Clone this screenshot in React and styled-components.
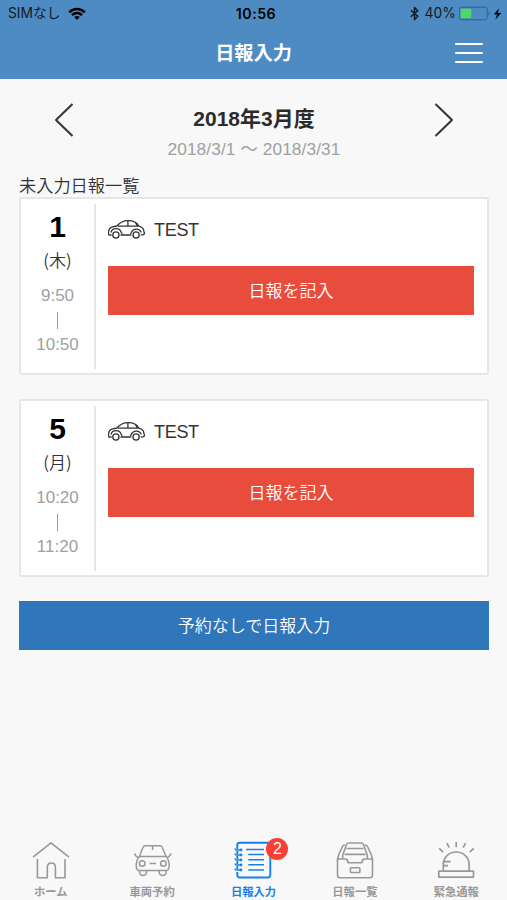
import React from "react";
import styled, { createGlobalStyle } from "styled-components";

const GlobalStyle = createGlobalStyle`
  * { box-sizing: border-box; }
  body {
    margin: 0;
    background: #f8f8f8;
    color: #333;
    font-family: "Liberation Sans", "Noto Sans CJK JP", sans-serif;
  }
`;

const Screen = styled.div`
  width: 507px;
  height: 900px;
  display: flex;
  flex-direction: column;
  background: #f8f8f8;
  overflow: hidden;
`;

const Header = styled.header`
  height: 79px;
  flex: none;
  background: #4f8bc3;
`;

const StatusBar = styled.div`
  height: 27px;
  display: grid;
  grid-template-columns: 1fr auto 1fr;
  align-items: center;
  padding: 0 5px 0 8px;
  color: #101a24;
  font-family: Inter, "Noto Sans CJK JP", sans-serif;
  font-size: 14px;
  line-height: 27px;
`;

const StatusGroup = styled.div`
  display: flex;
  align-items: center;
  height: 27px;
  justify-content: ${(p) => (p.$end ? "flex-end" : "flex-start")};
`;

const Carrier = styled.span`
  width: 60px;
  font-size: 13.8px;
  white-space: nowrap;
  line-height: 29px;
`;

const Clock = styled.span`
  font-weight: 600;
  font-size: 14.2px;
  letter-spacing: 0.5px;
  margin-left: 2px;
  color: #000;
`;

const Percent = styled.span`
  margin: 0 3px 0 6px;
  font-size: 13.8px;
  line-height: 29px;
  letter-spacing: 0.1px;
`;

const TitleBar = styled.div`
  height: 52px;
  display: grid;
  grid-template-columns: 1fr auto 1fr;
  align-items: center;
  padding: 0 24px;
`;

const Title = styled.h1`
  grid-column: 2;
  margin: 0;
  color: #fff;
  font-size: 19.2px;
  line-height: 54px;
  height: 52px;
  font-weight: 700;
`;

const MenuButton = styled.button`
  justify-self: end;
  width: 28px;
  height: 21px;
  padding: 0;
  border: 0;
  background: none;
  display: flex;
  flex-direction: column;
  justify-content: space-between;
`;

const MenuLine = styled.span`
  width: 28px;
  height: 2.4px;
  border-radius: 1px;
  background: #fff;
`;

const Main = styled.main`
  flex: 1;
  padding: 0 18px 0 19px;
`;

const MonthNav = styled.div`
  height: 95px;
  display: flex;
  justify-content: space-between;
  align-items: flex-start;
  padding: 23px 35px 0 35px;
`;

const MonthText = styled.div`
  text-align: center;
`;

const Month = styled.div`
  height: 31px;
  line-height: 33px;
  font-size: 21px;
  font-weight: 700;
  color: #2b2b2b;
`;

const Range = styled.div`
  height: 31px;
  line-height: 33px;
  font-size: 17.3px;
  letter-spacing: 0.1px;
  color: #a0a0a0;
`;

const SectionLabel = styled.h2`
  margin: 0;
  height: 23px;
  line-height: 24px;
  font-size: 17.2px;
  font-weight: 350;
  color: #333;
`;

const Card = styled.section`
  height: 178px;
  margin-bottom: 24px;
  display: flex;
  background: #fff;
  border: 2px solid #e6e6e6;
  border-radius: 2px;
  padding: 5px 13px 4px 0;
`;

const DateColumn = styled.div`
  width: 75px;
  border-right: 2px solid #e7e7e7;
  text-align: center;
`;

const Day = styled.div`
  height: 39px;
  line-height: 45px;
  font-size: 30px;
  font-weight: 700;
  color: #000;
`;

const Weekday = styled.div`
  height: 34px;
  line-height: 34px;
  font-family: "Noto Sans CJK JP", sans-serif;
  font-size: 17px;
  font-weight: 350;
  color: #333;
`;

const Time = styled.div`
  height: 37px;
  line-height: 38px;
  font-size: 17px;
  color: #a0a0a0;
`;

const TimeBar = styled.div`
  width: 1.3px;
  height: 17px;
  margin: -2px auto -3px;
  background: #999;
`;

const CardBody = styled.div`
  flex: 1;
  padding-left: 12px;
`;

const Vehicle = styled.div`
  height: 62px;
  padding-top: 14px;
  display: flex;
  align-items: flex-start;
`;

const VehicleName = styled.span`
  margin-left: 8px;
  line-height: 24px;
  font-size: 18px;
  letter-spacing: -0.3px;
`;

const ActionButton = styled.button`
  display: block;
  width: 100%;
  height: 49px;
  padding: 2px 0 0;
  border: 0;
  background: ${(p) => (p.$primary ? "#2f76ba" : "#e74c3d")};
  color: #fff;
  font-family: inherit;
  font-size: 17px;
  font-weight: 350;
  line-height: 47px;
`;

const TabBar = styled.nav`
  height: 64px;
  flex: none;
  display: grid;
  grid-template-columns: repeat(5, 1fr);
`;

const Tab = styled.div`
  display: flex;
  flex-direction: column;
  align-items: center;
  color: ${(p) => (p.$active ? "#1680ec" : "#999")};
`;

const TabIcon = styled.span`
  position: relative;
  width: 44px;
  height: 46px;
`;

const TabLabel = styled.span`
  height: 18px;
  line-height: 20px;
  font-size: 11.3px;
  font-weight: 700;
`;

const Badge = styled.span`
  position: absolute;
  left: 35px;
  top: 1.5px;
  width: 22px;
  height: 22px;
  border-radius: 50%;
  background: #fb3d37;
  color: #fff;
  font-size: 16px;
  line-height: 22px;
  text-align: center;
`;

const Line = styled.svg`
  display: block;
  flex: none;
  fill: none;
  stroke: currentColor;
  stroke-width: ${(p) => p.$weight || 1.6};
  stroke-linejoin: round;
`;

function Chevron({ right }) {
  return (
    <Line width="20" height="35" viewBox="0 0 20 35" $weight={2}>
      <path d={right ? "M1.5 2 18 18 1.5 34" : "M18.5 2 2 18 18.5 34"} />
    </Line>
  );
}

function Wifi() {
  return (
    <Line width="18" height="14" viewBox="0 0 18 14" $weight={2.5}>
      <path d="M1.2 5.3C5.7.8 12.3.8 16.8 5.3M4 8.2C7 5.4 11 5.4 14 8.2" stroke="#000" />
      <path d="M9 12.9 6.2 10Q9 7.8 11.8 10Z" fill="#000" stroke="none" />
    </Line>
  );
}

function Bluetooth() {
  return (
    <Line width="9" height="15" viewBox="0 0 9 15" $weight={1.5}>
      <path d="M.8 4.3 7.8 10.2 4.5 13.5V1.5L7.8 4.8.8 10.7" />
    </Line>
  );
}

function Battery() {
  return (
    <Line width="34" height="15" viewBox="0 0 34 15" $weight={1}>
      <rect x=".2" y="1.2" width="28" height="12.6" rx="2.3" stroke="#315f89" />
      <rect x="1.7" y="2.8" width="10.5" height="9.5" rx="1" fill="#4cd964" stroke="none" />
      <path d="M29.5 5.5q2.2 2 0 4z" fill="#315f89" stroke="none" />
    </Line>
  );
}

function Bolt() {
  return (
    <svg width="9" height="12" viewBox="0 0 9 12">
      <path d="M6.2.3.7 6.6H4L2.3 11.7 8.3 5H4.9Z" fill="#050a10" />
    </svg>
  );
}

function SideCar() {
  return (
    <Line width="38" height="22" viewBox="0.7 0 38 22" $weight={1.3}>
      <path d="M4.3 17H2.2Q.8 17 1.2 15.3 1.2 10.2 4.5 9.2L9.5 8Q14 2.6 21 2.6 28.6 2.6 31.7 8.2 36.4 9.6 36.6 13.4L37.2 15.2Q37 16.8 35.5 16.8H33.4M13.2 17H24" />
      <path d="M10.5 8.2H31.2M28.4 4.8 30.2 8.2M20.6 3V8.2" />
      <path d="M3.6 14.5A5.4 5.4 0 0 1 14 14.5L15 16M23.2 16 24 14.5A5.4 5.4 0 0 1 34 14.5" />
      <circle cx="8.6" cy="17" r="3.1" />
      <circle cx="28.8" cy="17" r="3.1" />
    </Line>
  );
}

function HomeIcon() {
  return (
    <Line width="44" height="46" viewBox="0 0 44 46">
      <path d="M4 21.2 22 6.8 40 21.2" />
      <path d="M8.4 23V41.7H18.3V31.5Q18.3 27 22.3 27 26.4 27 26.4 31.5V41.7H36V23" />
    </Line>
  );
}

function CarIcon() {
  return (
    <Line width="44" height="46" viewBox="0 0 44 46" $weight={1.5}>
      <path d="M9.5 20.2 13 11.3Q13.5 9.8 15.2 9.8H30Q31.6 9.8 32.2 11.3L36 20.2" />
      <path d="M9.5 20.5H36Q39 23.5 39.2 29.5 39 34.3 36.3 34.5H9Q6.3 34.3 6.2 29.5 6.5 23.5 9.5 20.5ZM8.8 21.7Q5.3 20.5 4.7 17.3M36.7 21.7Q40.2 20.5 40.8 17.3M22.6 10V14M19.6 27.5H26" />
      <circle cx="12.2" cy="27.5" r="2.8" />
      <circle cx="33.4" cy="27.5" r="2.8" />
      <path d="M9.5 34.5V36A3.5 3.5 0 0 0 16.5 36V34.5M29.2 34.5V36A3.5 3.5 0 0 0 36.2 36V34.5" />
    </Line>
  );
}

function NotebookIcon() {
  return (
    <Line width="44" height="46" viewBox="0 0 44 46" $weight={1.9}>
      <path d="M6.3 13V9Q6.3 6.7 8.8 6.7H36.7Q39.3 6.7 39.3 9V39Q39.3 41.5 36.7 41.5H8.8Q6.3 41.5 6.3 39V36" />
      <path d="M6.3 15V18M6.3 20V23M6.3 25V28M6.3 30V33" />
      <path d="M15 13.4H33M17.3 18.5H33M17.3 23.7H33M17.3 28.8H33M17.3 34H33" strokeWidth="1.5" />
      {[14, 19, 24, 29, 34].map((y) => (
        <g key={y}>
          <path d={`M9.5 ${y}H5Q3.8 ${y} 4.3 ${y - 1.6}`} strokeWidth="1.3" />
          <circle cx="10" cy={y} r="1.4" fill="currentColor" stroke="none" />
        </g>
      ))}
    </Line>
  );
}

function TrayIcon() {
  return (
    <Line width="44" height="46" viewBox="0 0 44 46" $weight={1.6}>
      <path d="M4.5 23H12.5Q14.8 23 15 26.7H29Q29.3 23 31.6 23H39.5V39Q39.5 41.7 37 41.7H7Q4.5 41.7 4.5 39Z" />
      <path d="M4.5 24.5Q4.7 21 6 18L9.5 10.5Q10 9 12 9M39.5 24.5Q39.3 21 38 18L34.5 10.5Q34 9 32 9" />
      <path d="M9.7 22.5V19.2L13.3 9Q14 7 15.7 7H28.5Q30 7 30.7 9L34.3 19.2V22.5M13.5 12.5H30.5M11.5 18.4H32.5" />
      <rect x="17.4" y="31.8" width="9.5" height="4.7" rx=".7" />
    </Line>
  );
}

function SirenIcon() {
  return (
    <Line width="44" height="46" viewBox="0 0 44 46" $weight={1.7}>
      <path d="M9.3 34.5V28A12.9 12 0 0 1 35.1 28V34.5M4.8 35.1H39.5V41.1H4.8Z" />
      <path d="M9.5 25.7H16.7M9.5 29.7H14" />
      <path d="M5.2 12.3 9 16.2M12.9 7.2 15.2 11.6M22.2 6V11.2M31.5 7.2 29.2 11.6M39.7 12.3 35.8 16.2" />
    </Line>
  );
}

const reports = [
  { day: "1", weekday: "(木)", start: "9:50", end: "10:50" },
  { day: "5", weekday: "(月)", start: "10:20", end: "11:20" },
];

const tabs = [
  { label: "ホーム", Icon: HomeIcon },
  { label: "車両予約", Icon: CarIcon },
  { label: "日報入力", Icon: NotebookIcon, active: true, badge: "2" },
  { label: "日報一覧", Icon: TrayIcon },
  { label: "緊急通報", Icon: SirenIcon },
];

export default function App() {
  return (
    <Screen lang="ja">
      <GlobalStyle />
      <Header>
        <StatusBar>
          <StatusGroup>
            <Carrier>SIMなし</Carrier>
            <Wifi />
          </StatusGroup>
          <Clock>10:56</Clock>
          <StatusGroup $end>
            <Bluetooth />
            <Percent>40%</Percent>
            <Battery />
            <Bolt />
          </StatusGroup>
        </StatusBar>
        <TitleBar>
          <Title>日報入力</Title>
          <MenuButton aria-label="メニュー">
            <MenuLine />
            <MenuLine />
            <MenuLine />
          </MenuButton>
        </TitleBar>
      </Header>
      <Main>
        <MonthNav>
          <Chevron />
          <MonthText>
            <Month>2018年3月度</Month>
            <Range>2018/3/1 〜 2018/3/31</Range>
          </MonthText>
          <Chevron right />
        </MonthNav>
        <SectionLabel>未入力日報一覧</SectionLabel>
        {reports.map((r) => (
          <Card key={r.day}>
            <DateColumn>
              <Day>{r.day}</Day>
              <Weekday>{r.weekday}</Weekday>
              <Time>{r.start}</Time>
              <TimeBar />
              <Time>{r.end}</Time>
            </DateColumn>
            <CardBody>
              <Vehicle>
                <SideCar />
                <VehicleName>TEST</VehicleName>
              </Vehicle>
              <ActionButton>日報を記入</ActionButton>
            </CardBody>
          </Card>
        ))}
        <ActionButton $primary>予約なしで日報入力</ActionButton>
      </Main>
      <TabBar>
        {tabs.map(({ label, Icon, active, badge }) => (
          <Tab key={label} $active={active}>
            <TabIcon>
              <Icon />
              {badge && <Badge>{badge}</Badge>}
            </TabIcon>
            <TabLabel>{label}</TabLabel>
          </Tab>
        ))}
      </TabBar>
    </Screen>
  );
}
